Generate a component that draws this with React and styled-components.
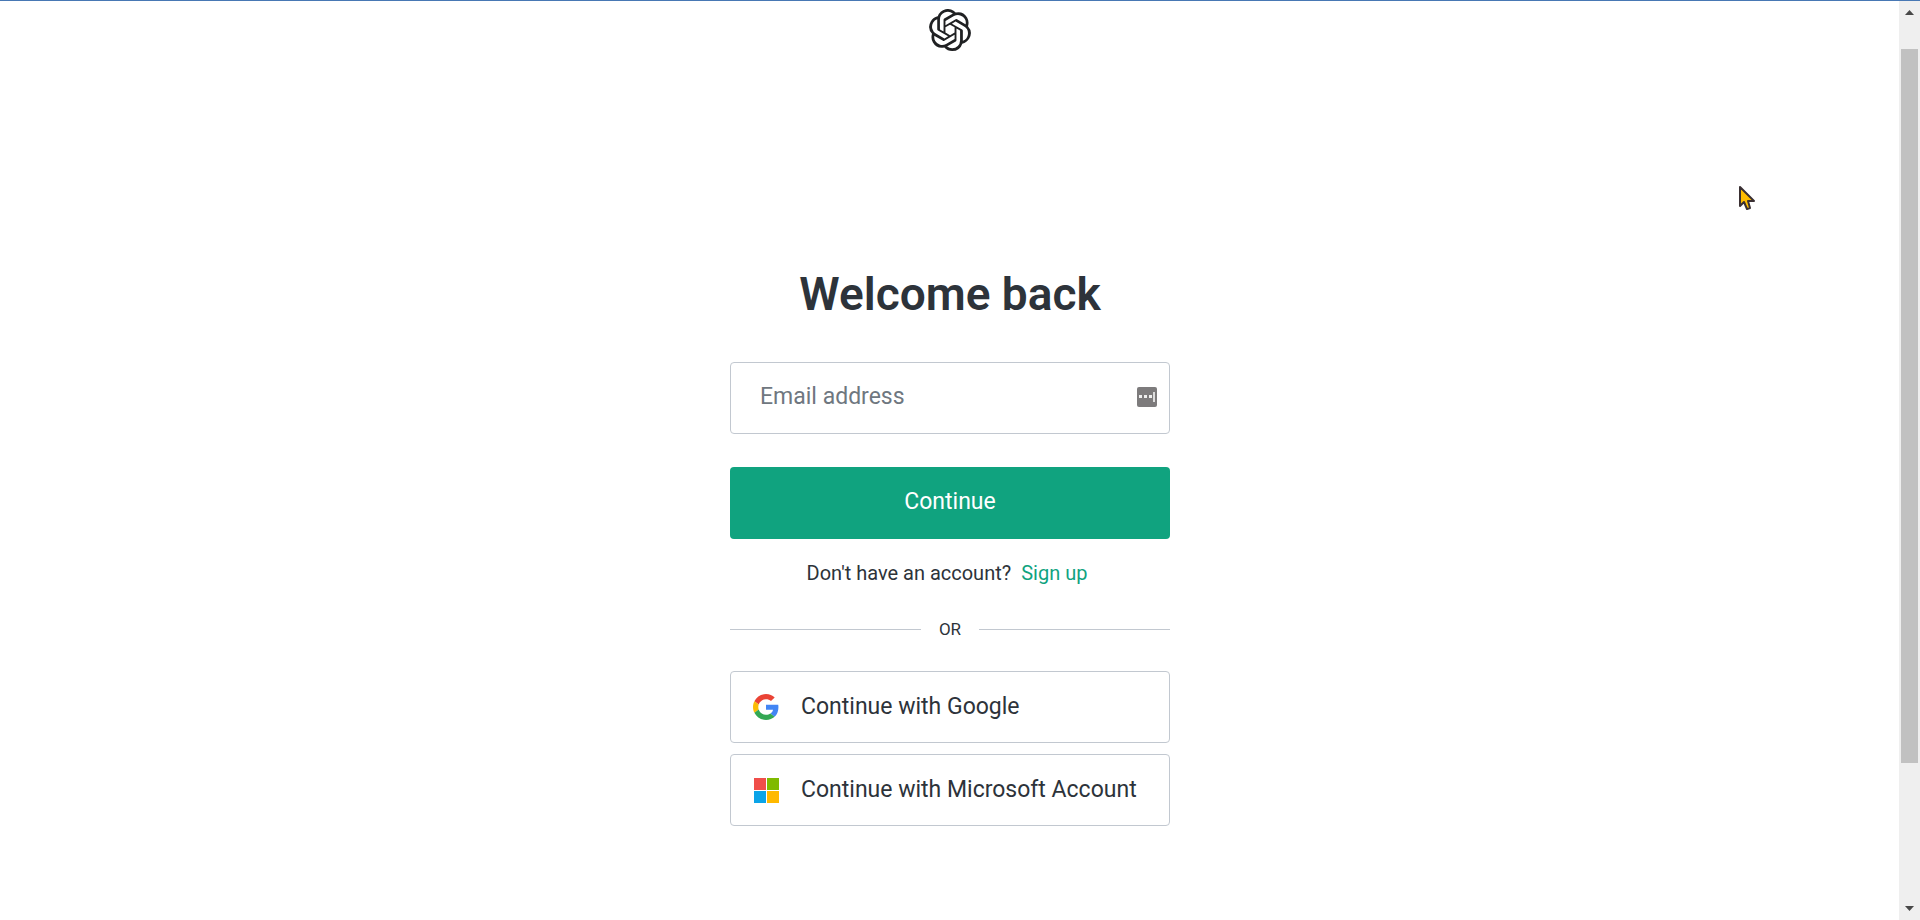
import React from "react";
import styled, { createGlobalStyle } from "styled-components";
import { SiOpenai } from "react-icons/si";

const ink = "#2d333a";
const line = "#c2c8d0";
const green = "#10a37f";

const GlobalStyle = createGlobalStyle`
  *, *::before, *::after { box-sizing: border-box; }
  body {
    margin: 0;
    background: #fff;
    color: ${ink};
    font-family: Roboto, "Liberation Sans", sans-serif;
  }
`;

const Shell = styled.div`
  display: flex;
  min-height: 100vh;
  border-top: 1px solid #4878b4;
`;

const Page = styled.div`
  flex: 1;
  display: flex;
  flex-direction: column;
  align-items: center;
  padding-left: 1px;
`;

const Header = styled.header`
  padding-top: 8px;
  height: 252px;
  color: #202123;
  svg { display: block; }
`;

const Main = styled.main`
  width: 100%;
  max-width: 440px;
`;

const Title = styled.h1`
  margin: 0 0 36px;
  padding-top: 9px;
  font-size: 46px;
  line-height: 64px;
  font-weight: 600;
  text-align: center;
`;

const Field = styled.div`
  display: flex;
  align-items: center;
  height: 72px;
  margin-bottom: 33px;
  padding: 0 12px 3px 29px;
  border: 1px solid ${line};
  border-radius: 4px;
`;

const EmailInput = styled.input`
  flex: 1;
  min-width: 0;
  padding: 0;
  border: 0;
  outline: 0;
  background: transparent;
  color: ${ink};
  font: inherit;
  font-size: 23px;
  line-height: 32px;
  &::placeholder { color: #6f7780; opacity: 1; }
`;

const Submit = styled.button`
  display: block;
  width: 100%;
  height: 72px;
  padding: 0 0 3px;
  border: 0;
  border-radius: 4px;
  background: ${green};
  color: #fff;
  font: inherit;
  font-size: 23px;
`;

const SignUp = styled.p`
  display: flex;
  justify-content: center;
  gap: 10px;
  margin: 0;
  padding: 22px 6px 0 0;
  font-size: 20px;
  line-height: 24px;
`;

const Link = styled.a`
  color: ${green};
  text-decoration: none;
`;

const Divider = styled.div`
  display: flex;
  align-items: center;
  gap: 18px;
  margin: 32px 0 29px;
  font-size: 17px;
  line-height: 25px;
  &::before, &::after {
    content: "";
    flex: 1;
    height: 1px;
    background: ${line};
  }
`;

const Providers = styled.div`
  display: flex;
  flex-direction: column;
  gap: 11px;
`;

const ProviderButton = styled.button`
  display: flex;
  align-items: center;
  gap: 22px;
  height: 72px;
  padding: 0 22px;
  border: 1px solid ${line};
  border-radius: 4px;
  background: transparent;
  color: ${ink};
  font: inherit;
  font-size: 23px;
  span { padding-bottom: 2px; white-space: nowrap; }
`;

const ScrollBar = styled.div`
  display: flex;
  flex-direction: column;
  align-items: center;
  width: 21px;
  background: #efefef;
`;

const ArrowBox = styled.svg`
  display: block;
  width: 21px;
  height: 21px;
  fill: #484848;
`;

const Track = styled.div`
  flex: 1;
  display: flex;
  flex-direction: column;
  &::before { content: ""; flex: 27; }
  &::after { content: ""; flex: 136; }
`;

const Thumb = styled.div`
  flex: 714;
  width: 17px;
  background: #c1c1c1;
`;

const Pointer = styled.svg`
  position: absolute;
  top: 185px;
  right: 164px;
`;

const GoogleMark = () => (
  <svg width="26" height="26" viewBox="0 0 48 48" aria-hidden="true">
    <path fill="#EA4335" d="M24 9.5c3.54 0 6.71 1.22 9.21 3.6l6.85-6.85C35.9 2.38 30.47 0 24 0 14.62 0 6.51 5.38 2.56 13.22l7.98 6.19C12.43 13.72 17.74 9.5 24 9.5z" />
    <path fill="#4285F4" d="M46.98 24.55c0-1.57-.15-3.09-.38-4.55H24v9.02h12.94c-.58 2.96-2.26 5.48-4.78 7.18l7.73 6c4.51-4.18 7.09-10.36 7.09-17.65z" />
    <path fill="#FBBC05" d="M10.53 28.59c-.48-1.45-.76-2.99-.76-4.59s.27-3.14.76-4.59l-7.98-6.19C.92 16.46 0 20.12 0 24c0 3.88.92 7.54 2.56 10.78l7.97-6.19z" />
    <path fill="#34A853" d="M24 48c6.48 0 11.93-2.13 15.89-5.81l-7.73-6c-2.15 1.45-4.92 2.3-8.16 2.3-6.26 0-11.57-4.22-13.47-9.91l-7.98 6.19C6.51 42.62 14.62 48 24 48z" />
  </svg>
);

const MicrosoftMark = () => (
  <svg width="26" height="26" viewBox="0 0 26 26" aria-hidden="true">
    <path fill="#f04e4a" d="M1 1h12v12H1z" />
    <path fill="#7fba00" d="M14 1h12v12H14z" />
    <path fill="#0ba4e8" d="M1 14h12v12H1z" />
    <path fill="#ffb900" d="M14 14h12v12H14z" />
  </svg>
);

const PasswordManagerMark = () => (
  <svg width="20" height="20" viewBox="0 0 20 20" aria-hidden="true">
    <rect width="20" height="20" rx="2" fill="#7d7b7c" />
    <path fill="#eee" d="M2 8h3v3H2zM7 8h3v3H7zM12 8h3v3h-3z" />
    <path fill="#ddd" d="M16 5h2v10h-2z" />
  </svg>
);

export default function App() {
  return (
    <>
      <GlobalStyle />
      <Shell>
        <Page>
          <Header>
            <SiOpenai size={42} aria-label="OpenAI" />
          </Header>
          <Main>
            <Title>Welcome back</Title>
            <form onSubmit={(e) => e.preventDefault()}>
              <Field>
                <EmailInput type="email" placeholder="Email address" aria-label="Email address" />
                <PasswordManagerMark />
              </Field>
              <Submit type="submit">Continue</Submit>
            </form>
            <SignUp>
              Don't have an account? <Link href="#signup">Sign up</Link>
            </SignUp>
            <Divider>OR</Divider>
            <Providers>
              <ProviderButton type="button">
                <GoogleMark />
                <span>Continue with Google</span>
              </ProviderButton>
              <ProviderButton type="button">
                <MicrosoftMark />
                <span>Continue with Microsoft Account</span>
              </ProviderButton>
            </Providers>
          </Main>
        </Page>
        <ScrollBar aria-hidden="true">
          <ArrowBox viewBox="0 0 21 21"><path d="M6 14l4.500-5 4.500 5z" /></ArrowBox>
          <Track><Thumb /></Track>
          <ArrowBox viewBox="0 0 21 21"><path d="M6 7l4.500 5 4.500-5z" /></ArrowBox>
        </ScrollBar>
      </Shell>
      <Pointer width="18" height="26" viewBox="0 0 18 26" aria-hidden="true">
        <path d="M2 2v19l4-4 3 7 3-1-2-7h6z" fill="#ffbd00" stroke="#3a3033" strokeWidth="2" strokeLinejoin="round" />
      </Pointer>
    </>
  );
}
